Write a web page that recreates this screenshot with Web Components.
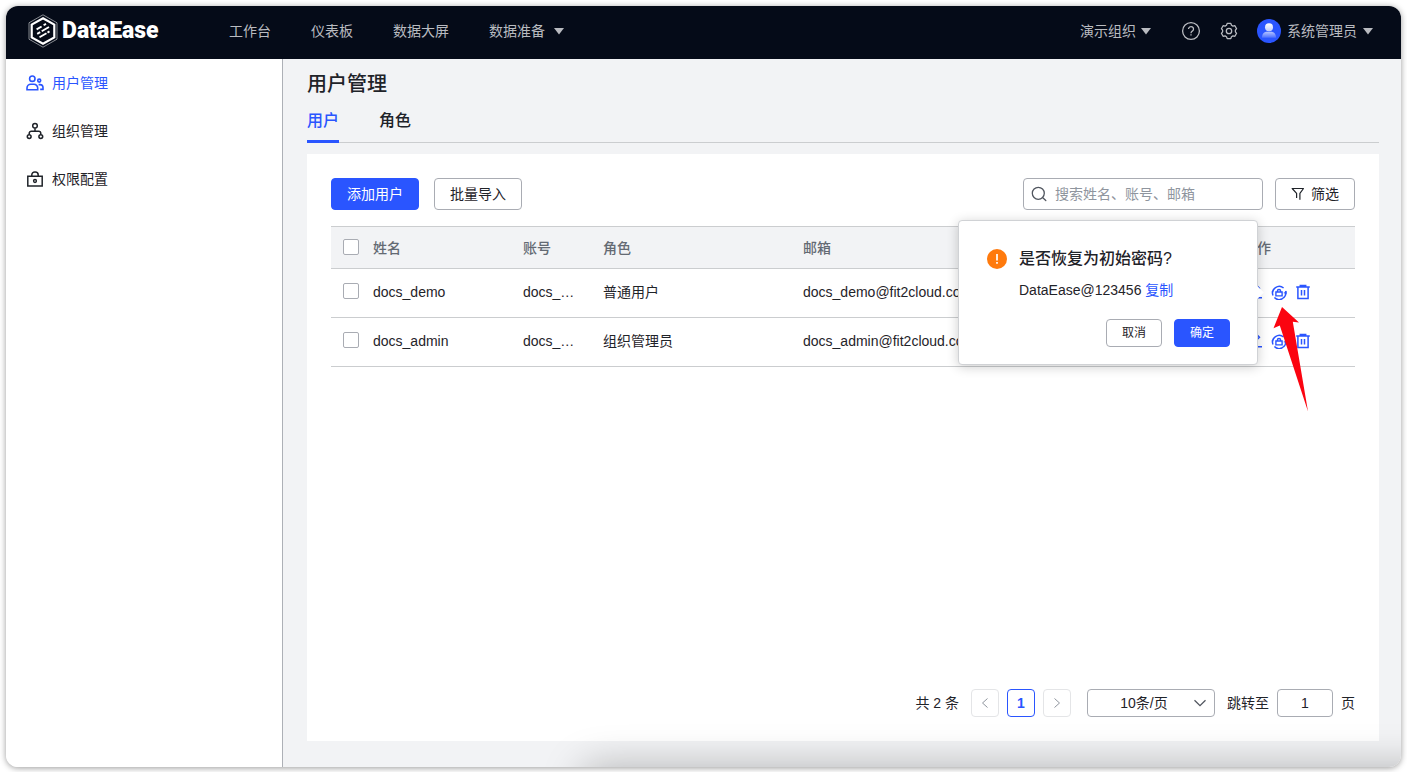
<!DOCTYPE html>
<html lang="zh-CN">
<head>
<meta charset="utf-8">
<title>DataEase - 用户管理</title>
<style>
  html, body { margin: 0; height: 100%; }
  body {
    --primary: #2a55ff;
    --text: #1f2329;
    --text-2: #646a73;
    --border: #a9acb3;
    --line: #cbcdcf;
    --bg: #f2f3f5;
    background: #fff;
    color: var(--text);
    font: 14px/22px "Liberation Sans", "Noto Sans CJK SC", sans-serif;
  }
</style>
</head>
<body>
<de-app>
  <de-header slot="header"></de-header>
  <de-sidebar slot="sidebar">
    <de-menu-item icon="users" active>用户管理</de-menu-item>
    <de-menu-item icon="org">组织管理</de-menu-item>
    <de-menu-item icon="lock">权限配置</de-menu-item>
  </de-sidebar>
  <de-user-page></de-user-page>
</de-app>

<script>
const ICONS = {
  users: '<svg viewBox="0 0 18 18" fill="none" stroke="currentColor" stroke-width="1.6"><circle cx="6.3" cy="4.7" r="2.7"/><path d="M1 15.8v-1.8a3.8 3.8 0 0 1 3.8-3.8h3.1a3.8 3.8 0 0 1 3.8 3.8v1.8z"/><circle cx="13.2" cy="6.6" r="1.5"/><path d="M12.6 10.6h1.4a3 3 0 0 1 3 3v1.800h-2.800"/></svg>',
  org: '<svg viewBox="0 0 18 18" fill="none" stroke="currentColor" stroke-width="1.5"><circle cx="9" cy="3.8" r="2.3"/><circle cx="3.2" cy="14.6" r="1.9"/><circle cx="14.8" cy="14.6" r="1.9"/><path d="M9 6.2v3M3.2 12.6v-1.2a2.2 2.2 0 0 1 2.2-2.2h7.2a2.2 2.2 0 0 1 2.2 2.2v1.2"/></svg>',
  lock: '<svg viewBox="0 0 18 18" fill="none" stroke="currentColor" stroke-width="1.5"><path d="M1.8 6.200h14.4v9.800H1.8z"/><path d="M5.8 6V4.9a3 3 0 0 1 3-3h.4a3 3 0 0 1 3 3V6"/><circle cx="9" cy="11" r="1.4"/></svg>',
  caret: '<svg viewBox="0 0 10 7" fill="currentColor"><path d="M0 0h10L5 6.5z"/></svg>',
  help: '<svg viewBox="0 0 20 20" fill="none" stroke="currentColor" stroke-width="1.3"><circle cx="10" cy="10" r="8.4"/><path d="M7.5 8.1a2.5 2.4 0 1 1 3.8 2c-.8.6-1.3 1-1.3 2.1"/><path d="M10 13.3v1.3"/></svg>',
  gear: '<svg viewBox="0 0 20 20" fill="none" stroke="currentColor" stroke-width="1.3" stroke-linejoin="round"><circle cx="10" cy="10" r="2.7"/><path d="M8.2 2.4h3.6l.7 1.9 1.4.8 2-.4 1.7 3-1.2 1.5v1.6l1.2 1.5-1.7 3-2-.4-1.4.8-.7 1.9H8.2l-.7-1.9-1.4-.8-2 .4-1.7-3 1.2-1.5V9.2L2.4 7.7l1.7-3 2 .4 1.4-.8z"/></svg>',
  avatar: '<svg viewBox="0 0 24 24"><defs><linearGradient id="g" x1="0" y1="0" x2="0" y2="1"><stop offset="0" stop-color="#fff" stop-opacity=".65"/><stop offset="1" stop-color="#fff" stop-opacity=".15"/></linearGradient><linearGradient id="h" x1="0" y1="0" x2="0" y2="1"><stop offset="0" stop-color="#fff"/><stop offset="1" stop-color="#fff" stop-opacity=".7"/></linearGradient></defs><circle cx="12" cy="12" r="12" fill="#2a55ff"/><path d="M5 18.8c0-4 2.2-6 5-6h4c2.8 0 5 2 5 6z" fill="url(#g)"/><circle cx="12" cy="8.2" r="4" fill="url(#h)"/></svg>',
  search: '<svg viewBox="0 0 16 16" fill="none" stroke="currentColor" stroke-width="1.3" stroke-linecap="round"><circle cx="7.3" cy="7.3" r="6"/><path d="M11.8 11.8l3 2.8"/></svg>',
  filter: '<svg viewBox="0 0 14 14" fill="none" stroke="currentColor" stroke-width="1.2" stroke-linejoin="round"><path d="M5.600 11V6.300L1.200 1.500h11.300L8.900 6.300v6.400"/></svg>',
  edit: '<svg viewBox="0 0 16 16" fill="none" stroke="currentColor" stroke-width="1.4"><path d="M1.5 13.8h13.5M3 11V8.5L10 1.7l2.5 2.5L5.5 11z"/></svg>',
  reset: '<svg viewBox="0 0 16 16" fill="none" stroke="currentColor" stroke-width="1.4"><path d="M2 11.400A6.700 6.700 0 0 1 12.600 4M14.500 7A6.700 6.700 0 0 1 3.400 13.600M1.500 7.200A6.700 6.700 0 0 0 1.900 11.200M5.500 15a6.700 6.700 0 0 0 6 -.3"/><path d="M4.900 8h6.200v3.900H4.900zM6.400 8V7.100a1.600 1.600 0 0 1 3.200 0V8"/><path d="M12.300 9l3.200 1.300.3-3.400z" fill="currentColor" stroke="none"/></svg>',
  trash: '<svg viewBox="0 0 16 16" fill="none" stroke="currentColor" stroke-width="1.5"><path d="M1.2 3h13.6M5.3 3V1.400h5.400V3M2.900 3v11.600h10.200V3M6.500 6v5.500M9.500 6v5.500"/></svg>',
  left: '<svg viewBox="0 0 12 12" fill="none" stroke="currentColor" stroke-width="1"><path d="M8.5 1.5L3.5 6l5 4.5"/></svg>',
  right: '<svg viewBox="0 0 12 12" fill="none" stroke="currentColor" stroke-width="1"><path d="M3.5 1.5l5 4.5-5 4.5"/></svg>',
  down: '<svg viewBox="0 0 12 12" fill="none" stroke="currentColor" stroke-width="1.3"><path d="M.5 3.3L6 8.7l5.5-5.4"/></svg>',
  warn: '<svg viewBox="0 0 20 20"><circle cx="10" cy="10" r="10" fill="#ff7a0d"/><path d="M10 5v6.5M10 13v1.8" stroke="#fff" stroke-width="1.7"/></svg>',
  logo: '<svg viewBox="0 0 30 34" fill="none" stroke="#fff"><path d="M15 .8l14 8v16.4l-14 8-14-8V8.8z" stroke-width=".7" opacity=".75"/><path d="M15 4.2l11.3 6.4v12.8L15 29.8 3.7 23.4V10.6z" stroke-width="2.2"/><path d="M8.6 15.4l5-2.9M15.6 11.3l2.4-1.4M9.2 19.8l3-1.7M13.7 17.2l7.3-4.2M11.5 23.2l7-4M19.5 18.6l2-1.2" stroke-width="1.9"/></svg>',
  pointer: '<svg viewBox="0 0 35 105" fill="#fb0410"><path d="M9 0l17 15.500-6.200-.8L35 104.500 6.800 18.500.5 21.300z"/></svg>'
};

/* Registers an element whose open shadow root is filled from a template. */
function define(name, html, setup) {
  const template = document.createElement('template');
  template.innerHTML = html;
  customElements.define(name, class extends HTMLElement {
    constructor() {
      super();
      this.attachShadow({ mode: 'open' }).append(template.content.cloneNode(true));
    }
    connectedCallback() { if (setup) setup(this, this.shadowRoot); }
  });
}

define('de-icon', `
  <style>:host { display: block; flex: none; width: 16px; height: 16px; } span, svg { display: block; width: 100%; height: 100%; }</style>
  <span></span>`, (el, root) => {
  root.querySelector('span').innerHTML = ICONS[el.getAttribute('name')] || '';
});

define('de-button', `
  <style>
    :host { display: inline-block; }
    button {
      display: flex; align-items: center; justify-content: center; gap: 6px;
      box-sizing: border-box; width: 100%; height: 32px; padding: 0 15px;
      border: 1px solid var(--border); border-radius: 4px; background: #fff;
      color: var(--text); font: inherit; white-space: nowrap; cursor: pointer;
    }
    :host([primary]) button { background: var(--primary); border-color: var(--primary); color: #fff; }
    :host([small]) button { height: 28px; min-width: 56px; font-size: 12px; }
  </style>
  <button type="button"><slot></slot></button>`);

define('de-app', `
  <style>
    :host { display: block; box-sizing: border-box; min-height: 100vh; padding: 6px 6px 5px; }
    .window {
      display: grid; grid-template: 53px 1fr / 277px minmax(0, 1fr);
      min-height: calc(100vh - 11px); border-radius: 12px; overflow: hidden;
    }
    .frame { border-radius: 12px; box-shadow: 0 1px 6px rgba(0, 0, 0, .4); }
    .header { grid-column: 1 / -1; }
    .header, .side, main { display: grid; }
    main { position: relative; overflow: hidden; background: var(--bg); }
    main::after {
      content: ""; position: absolute; top: 100%; left: 300px; right: -80px; height: 120px;
      border-radius: 12px; box-shadow: 0 0 40px rgba(0, 0, 0, .27); pointer-events: none;
    }
  </style>
  <div class="frame"><div class="window">
    <div class="header"><slot name="header"></slot></div>
    <div class="side"><slot name="sidebar"></slot></div>
    <main><slot></slot></main>
  </div></div>`);

define('de-header', `
  <style>
    :host { display: block; background: #050b18; color: #b9bbc0; }
    header { display: flex; align-items: center; height: 50px; padding: 0 28px 0 22px; }
    a { color: inherit; text-decoration: none; }
    .brand { display: flex; align-items: center; gap: 4px; width: 201px; color: #fff; font: 900 23px/28px Roboto, sans-serif; }
    .brand de-icon { width: 30px; height: 34px; }
    nav { display: flex; gap: 40px; flex: 1; }
    .drop { display: flex; align-items: center; gap: 5px; }
    nav .drop { gap: 9px; }
    de-icon[name=caret] { width: 10px; height: 7px; }
    .tools { display: flex; align-items: center; }
    .round { display: block; margin-left: 30px; padding: 0; border: 0; background: none; color: inherit; }
    .round + .round, .user { margin-left: 18px; }
    .round de-icon { width: 20px; height: 20px; }
    .user { gap: 6px; }
    .user de-icon[name=avatar] { width: 24px; height: 24px; }
  </style>
  <header>
    <a class="brand" href="#"><de-icon name="logo"></de-icon>DataEase</a>
    <nav>
      <a href="#">工作台</a><a href="#">仪表板</a><a href="#">数据大屏</a>
      <a href="#" class="drop">数据准备<de-icon name="caret"></de-icon></a>
    </nav>
    <div class="tools">
      <a href="#" class="drop">演示组织<de-icon name="caret"></de-icon></a>
      <button class="round" type="button" aria-label="帮助"><de-icon name="help"></de-icon></button>
      <button class="round" type="button" aria-label="设置"><de-icon name="gear"></de-icon></button>
      <a href="#" class="drop user"><de-icon name="avatar"></de-icon>系统管理员<de-icon name="caret"></de-icon></a>
    </div>
  </header>`);

define('de-sidebar', `
  <style>:host { display: block; background: #fff; border-right: 1px solid #adb0b6; }</style>
  <nav><slot></slot></nav>`);

define('de-menu-item', `
  <style>
    :host { display: block; }
    a { display: flex; align-items: center; gap: 8px; height: 48px; padding: 0 20px; color: inherit; text-decoration: none; }
    :host([active]) a { color: var(--primary); }
    de-icon { width: 18px; height: 18px; }
  </style>
  <a href="#"><de-icon></de-icon><slot></slot></a>`, (el, root) => {
  const icon = document.createElement('de-icon');
  icon.setAttribute('name', el.getAttribute('icon'));
  root.querySelector('de-icon').replaceWith(icon);
});

define('de-tabs', `
  <style>
    :host { display: block; }
    div { display: flex; gap: 40px; box-sizing: border-box; height: 46px; border-bottom: 1px solid var(--line); }
    button {
      box-sizing: border-box; height: 46px; padding: 4px 0 0; border: 0; border-bottom: 3px solid transparent; background: none;
      color: inherit; font: inherit; font-size: 16px; font-weight: 500; line-height: 39px;
    }
    [aria-selected=true] { color: var(--primary); border-color: var(--primary); }
  </style>
  <div role="tablist">
    <button type="button" role="tab" aria-selected="true">用户</button>
    <button type="button" role="tab" aria-selected="false">角色</button>
  </div>`);

define('de-search', `
  <style>
    :host { display: block; }
    label { display: flex; align-items: center; gap: 8px; box-sizing: border-box; height: 32px; padding: 0 7px; border: 1px solid var(--border); border-radius: 4px; background: #fff; color: #51565f; }
    input { flex: 1; min-width: 0; padding: 0; border: 0; outline: 0; background: none; font: inherit; color: var(--text); }
    input::placeholder { color: #8f959e; opacity: 1; }
  </style>
  <label><de-icon name="search"></de-icon><input type="search" placeholder="搜索姓名、账号、邮箱" aria-label="搜索"></label>`);

define('de-popconfirm', `
  <style>
    :host {
      display: block; box-sizing: border-box; width: 300px; padding: 25px 27px 17px 28px;
      border: 1px solid #d0d2d5; border-radius: 4px; background: #fff; color: var(--text);
      box-shadow: 0 2px 12px rgba(0, 0, 0, .2);
    }
    :host::after {
      content: ""; position: absolute; top: calc(50% - 5px); right: -5px; width: 9px; height: 9px;
      background: #fff; transform: rotate(45deg);
    }
    .body { display: grid; grid-template-columns: 20px 1fr; column-gap: 12px; row-gap: 8px; align-items: center; }
    de-icon { width: 20px; height: 20px; }
    h2 { margin: 0; font-size: 16px; line-height: 25px; font-weight: 500; }
    p { grid-column: 2; margin: 0; white-space: nowrap; }
    a { color: var(--primary); text-decoration: none; }
    footer { display: flex; justify-content: flex-end; gap: 12px; margin-top: 18px; }
  </style>
  <div class="body">
    <de-icon name="warn"></de-icon>
    <h2><slot name="title"></slot></h2>
    <p><slot></slot> <a href="#">复制</a></p>
  </div>
  <footer><de-button small>取消</de-button><de-button small primary>确定</de-button></footer>`);

define('de-user-table', `
  <style>
    :host { display: block; }
    table { width: 100%; table-layout: fixed; border-collapse: separate; border-spacing: 0; }
    th, td { box-sizing: border-box; padding: 0 12px; text-align: left; border-bottom: 1px solid var(--line); white-space: nowrap; }
    th { height: 43px; border-top: 1px solid var(--line); background: var(--bg); color: var(--text-2); font-weight: 500; }
    td { height: 49px; padding-bottom: 2px; }
    th:first-child, td:first-child { padding-right: 0; }
    input { display: block; box-sizing: border-box; appearance: none; width: 16px; height: 16px; margin: 0 0 2px; border: 1px solid var(--border); border-radius: 2px; background: #fff; }
    .actions { display: flex; gap: 8px; padding-left: 4px; color: var(--primary); }
    .actions button { display: block; padding: 0; border: 0; background: none; color: inherit; }
    .anchor { position: relative; }
    de-popconfirm { position: absolute; z-index: 2; right: calc(100% + 13px); top: -64px; }
    .pointer { position: absolute; z-index: 3; left: 2px; top: 23px; width: 35px; height: 105px; }
  </style>
  <table>
    <colgroup><col style="width:30px"><col style="width:150px"><col style="width:80px"><col style="width:200px"><col><col style="width:124px"></colgroup>
    <thead><tr>
      <th><input type="checkbox" aria-label="全选"></th><th>姓名</th><th>账号</th><th>角色</th><th>邮箱</th><th>操作</th>
    </tr></thead>
    <tbody></tbody>
  </table>`, (el, root) => {
  const users = [
    ['docs_demo', '普通用户', 'docs_demo@fit2cloud.com'],
    ['docs_admin', '组织管理员', 'docs_admin@fit2cloud.com']
  ];
  const shorten = text => text.length > 8 ? text.slice(0, 5) + '…' : text;
  const confirm = `<de-popconfirm role="dialog"><span slot="title">是否恢复为初始密码?</span>DataEase@123456</de-popconfirm><de-icon class="pointer" name="pointer"></de-icon>`;
  root.querySelector('tbody').innerHTML = users.map(([name, role, mail], i) => `
    <tr>
      <td><input type="checkbox" aria-label="选择 ${name}"></td>
      <td>${name}</td><td>${shorten(name)}</td><td>${role}</td><td>${mail}</td>
      <td><div class="actions">
        <button type="button" aria-label="编辑"><de-icon name="edit"></de-icon></button>
        <div class="anchor"><button type="button" aria-label="重置密码"><de-icon name="reset"></de-icon></button>${i === 0 ? confirm : ''}</div>
        <button type="button" aria-label="删除"><de-icon name="trash"></de-icon></button>
      </div></td>
    </tr>`).join('');
});

define('de-pagination', `
  <style>
    :host { display: flex; align-items: center; justify-content: flex-end; gap: 12px; }
    .pages { display: flex; gap: 8px; margin-right: 4px; }
    button, select, input { box-sizing: border-box; height: 28px; border: 1px solid var(--border); border-radius: 4px; background: #fff; color: inherit; font: inherit; }
    button { display: grid; place-items: center; width: 28px; padding: 0; }
    button:disabled { border-color: #e4e5e7; color: #8f959e; }
    button[aria-current] { border-color: var(--primary); color: var(--primary); font-weight: 700; }
    button de-icon, .size de-icon { width: 12px; height: 12px; }
    .size { display: grid; align-items: center; }
    .size > * { grid-area: 1 / 1; }
    .size de-icon { justify-self: end; margin-right: 9px; pointer-events: none; color: #51565f; }
    select { appearance: none; width: 128px; padding: 0 30px 0 16px; text-align: center; text-align-last: center; }
    .jump { display: flex; align-items: center; gap: 8px; }
    input { width: 56px; padding: 0; text-align: center; }
  </style>
  <span>共 2 条</span>
  <div class="pages">
    <button type="button" disabled aria-label="上一页"><de-icon name="left"></de-icon></button>
    <button type="button" aria-current="page">1</button>
    <button type="button" disabled aria-label="下一页"><de-icon name="right"></de-icon></button>
  </div>
  <div class="size"><select aria-label="每页条数"><option>10条/页</option></select><de-icon name="down"></de-icon></div>
  <div class="jump"><label for="page">跳转至</label><input id="page" type="text" value="1"><span>页</span></div>`);

define('de-user-page', `
  <style>
    :host { display: flex; flex-direction: column; padding: 12px 22px 26px 24px; }
    h1 { margin: 0; font-size: 20px; line-height: 26px; font-weight: 500; }
    section { display: flex; flex-direction: column; flex: 1; gap: 16px; margin-top: 11px; padding: 24px; background: #fff; }
    .bar { display: flex; align-items: center; gap: 12px; }
    .left { display: flex; gap: 15px; margin-right: auto; }
    de-search { width: 240px; }
    de-pagination { margin-top: auto; }
    .bar de-icon { width: 14px; height: 14px; }
  </style>
  <h1>用户管理</h1>
  <de-tabs></de-tabs>
  <section>
    <div class="bar">
      <div class="left"><de-button primary>添加用户</de-button><de-button>批量导入</de-button></div>
      <de-search></de-search>
      <de-button><de-icon name="filter"></de-icon>筛选</de-button>
    </div>
    <de-user-table></de-user-table>
    <de-pagination></de-pagination>
  </section>`);
</script>
</body>
</html>
